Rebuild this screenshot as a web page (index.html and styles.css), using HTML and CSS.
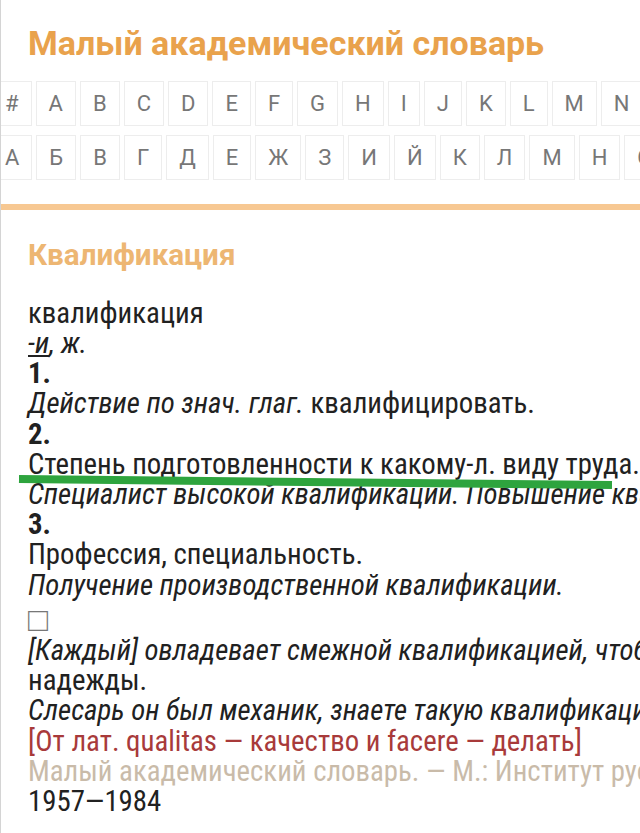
FILE: index.html
```html
<!DOCTYPE html>
<html lang="ru">
<head>
<meta charset="utf-8">
<title>Квалификация — Малый академический словарь</title>
<link rel="stylesheet" href="styles.css">
</head>
<body>
<div class="page">
  <h1 class="site-title">Малый академический словарь</h1>
  <nav class="alphabet">
    <div class="letters">
      <a class="letter">#</a><a class="letter">A</a><a class="letter">B</a><a class="letter">C</a><a class="letter">D</a><a class="letter">E</a><a class="letter">F</a><a class="letter">G</a><a class="letter">H</a><a class="letter">I</a><a class="letter">J</a><a class="letter">K</a><a class="letter">L</a><a class="letter">M</a><a class="letter">N</a><a class="letter">O</a><a class="letter">P</a>
    </div>
    <div class="letters">
      <a class="letter">А</a><a class="letter">Б</a><a class="letter">В</a><a class="letter">Г</a><a class="letter">Д</a><a class="letter">Е</a><a class="letter">Ж</a><a class="letter">З</a><a class="letter">И</a><a class="letter">Й</a><a class="letter">К</a><a class="letter">Л</a><a class="letter">М</a><a class="letter">Н</a><a class="letter">О</a><a class="letter">П</a>
    </div>
  </nav>
  <div class="divider"></div>
  <article class="entry">
    <h2 class="entry-title">Квалификация</h2>
    <div class="definition">
      <div class="line">квалификация</div>
      <div class="line"><em class="gram">-и</em><em>, ж.</em></div>
      <div class="line num">1.</div>
      <div class="line"><em>Действие по знач. глаг.</em> квалифицировать.</div>
      <div class="line num">2.</div>
      <div class="line">Степень подготовленности к какому-л. виду труда.</div>
      <div class="line"><em>Специалист высокой квалификации. Повышение квалификации.</em></div>
      <div class="line num">3.</div>
      <div class="line">Профессия, специальность.</div>
      <div class="line"><em>Получение производственной квалификации.</em></div>
      <div class="line mark">&#9633;</div>
      <div class="line"><em>[Каждый] овладевает смежной квалификацией, чтобы в случае нужды заменить товарища.</em> Кожевников, Корабль</div>
      <div class="line">надежды.</div>
      <div class="line"><em>Слесарь он был механик, знаете такую квалификацию.</em> Паустовский</div>
      <div class="line etym">[От лат. qualitas — качество и facere — делать]</div>
      <div class="line source">Малый академический словарь. — М.: Институт русского языка АН СССР. Евгеньева А. П.</div>
      <div class="line">1957—1984</div>
    </div>
  </article>
  <svg class="marker" width="640" height="833" viewBox="0 0 640 833" aria-hidden="true">
    <line x1="18" y1="479" x2="611" y2="485" stroke="#2ea43e" stroke-width="8"/>
  </svg>
</div>
</body>
</html>
```
FILE: styles.css
```css
html, body {
  margin: 0;
  padding: 0;
  background: #ffffff;
}
body {
  font-family: Roboto, "Liberation Sans", sans-serif;
  color: #212121;
}
.page {
  position: relative;
  width: 640px;
  height: 833px;
  overflow: hidden;
  box-sizing: border-box;
  border-left: 1px solid #d4d4d4;
}
.site-title {
  margin: 0;
  padding: 23px 0 0 27px;
  font-size: 34px;
  line-height: 40px;
  font-weight: 700;
  color: #e9a24c;
  white-space: nowrap;
}
.alphabet {
  margin-top: 18px;
  margin-left: -9px;
  display: flex;
  flex-direction: column;
  gap: 9px;
}
.letters {
  display: flex;
  gap: 4px;
  white-space: nowrap;
}
.letter {
  flex: none;
  height: 45px;
  box-sizing: border-box;
  border: 1px solid #ededed;
  padding: 0 12px;
  display: flex;
  align-items: center;
  justify-content: center;
  font-size: 22px;
  color: #777777;
}
.divider {
  margin-top: 24px;
  height: 6px;
  background: #f7c892;
}
.entry {
  padding: 27px 0 0 27px;
}
.entry-title {
  margin: 0;
  font-size: 29.6px;
  line-height: 36px;
  font-weight: 700;
  color: #edb672;
  white-space: nowrap;
}
.definition {
  margin-top: 24.8px;
  font-size: 28.8px;
  font-stretch: 75%;
  line-height: 30.2px;
}
.line {
  white-space: nowrap;
}
.num {
  font-weight: 700;
}
.gram {
  text-decoration: underline;
}
.mark {
  margin-top: 5px;
  font-size: 33px;
  font-stretch: 100%;
  color: #777777;
}
.etym {
  color: #a83a3a;
}
.source {
  color: #c9bba9;
}
.marker {
  position: absolute;
  top: 0;
  left: 0;
  pointer-events: none;
}
```
